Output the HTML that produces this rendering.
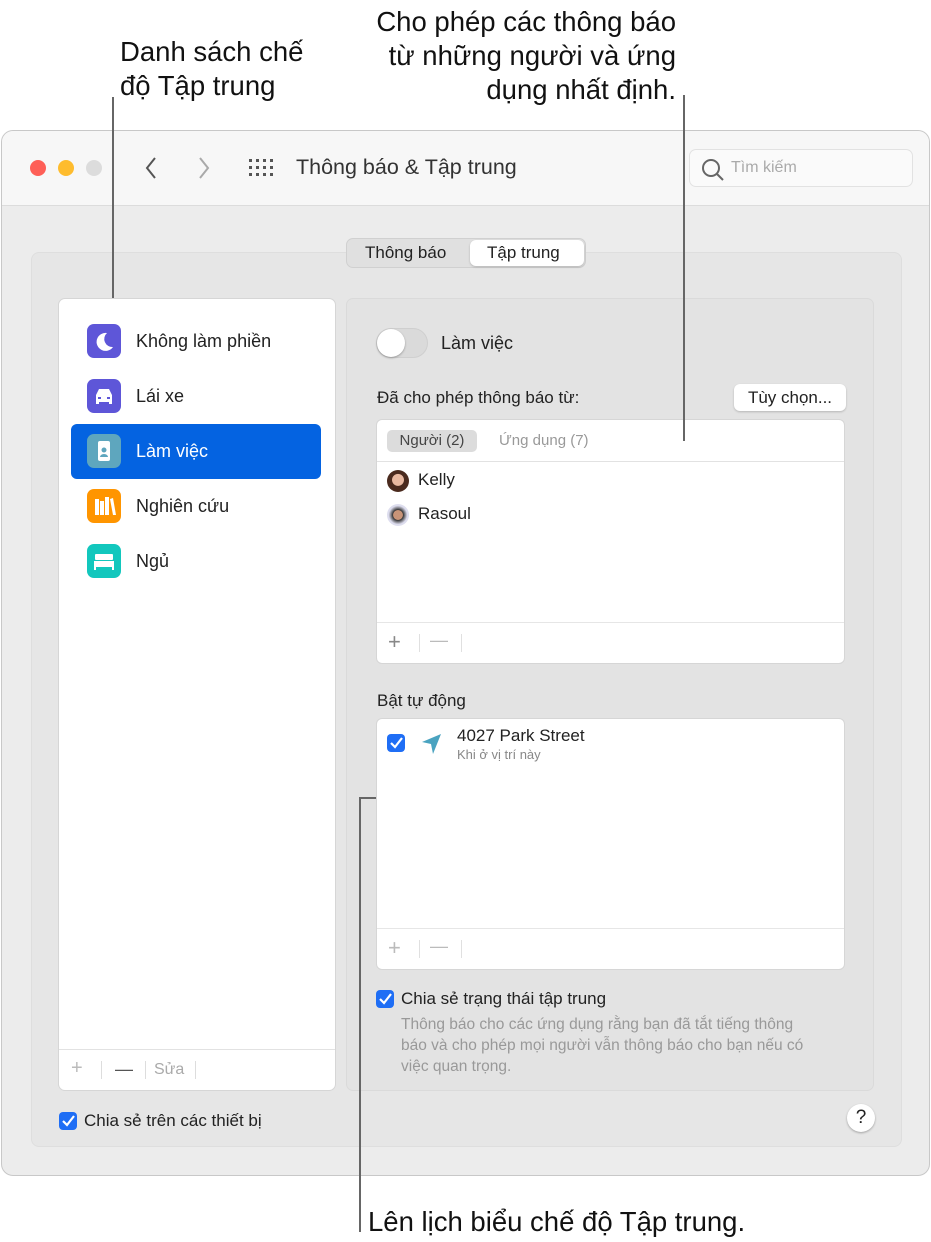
<!DOCTYPE html>
<html><head><meta charset="utf-8"><style>
*{box-sizing:border-box;margin:0;padding:0}
body{width:931px;height:1242px;background:#fff;position:relative;font-family:"Liberation Sans",sans-serif;color:#222;overflow:hidden}
.a{position:absolute}
.ann{position:absolute;font-size:27.5px;color:#111;line-height:34px}
.win{left:1px;top:130px;width:929px;height:1046px;border:1px solid #c8c8c8;border-radius:12px;background:#ececec;overflow:hidden}
.tb{left:0;top:0;width:100%;height:75px;background:#f7f7f7;border-bottom:1px solid #dcdcdc}
.dot{width:16px;height:16px;border-radius:50%;top:29px}
.t15{font-size:17px}
.icon{width:34px;height:34px;border-radius:7px;left:28px}
.row{left:12px;width:250px;height:55px}
.row span{position:absolute;left:65px;top:17px;font-size:18px}
.box{background:#fff;border:1px solid #d6d6d6;border-radius:6px}
.chk{width:18px;height:18px;border-radius:4px;background:#1f6ef5}
.line{background:#666;position:absolute}
</style></head><body>
<div class="ann" style="left:120px;top:35px">Danh sách chế<br>độ Tập trung</div>
<div class="ann" style="left:340px;top:5px;width:336px;text-align:right">Cho phép các thông báo<br>từ những người và ứng<br>dụng nhất định.</div>
<div class="ann" style="left:368px;top:1205px">Lên lịch biểu chế độ Tập trung.</div>

<div class="a win">
 <div class="a tb">
  <div class="a dot" style="left:28px;background:#fe5f57"></div>
  <div class="a dot" style="left:56px;background:#febc2e"></div>
  <div class="a dot" style="left:84px;background:#dcdcdc"></div>
  <svg class="a" style="left:140px;top:24px" width="20" height="26"><path d="M13 3L5 13l8 10" fill="none" stroke="#555" stroke-width="2"/></svg>
  <svg class="a" style="left:192px;top:24px" width="20" height="26"><path d="M6 3l8 10-8 10" fill="none" stroke="#aaa" stroke-width="2"/></svg>
  <svg class="a" style="left:246px;top:27px" width="28" height="20" fill="#555"><g><rect x="1" y="1" width="3" height="3"/><rect x="8" y="1" width="3" height="3"/><rect x="15" y="1" width="3" height="3"/><rect x="22" y="1" width="3" height="3"/><rect x="1" y="8" width="3" height="3"/><rect x="8" y="8" width="3" height="3"/><rect x="15" y="8" width="3" height="3"/><rect x="22" y="8" width="3" height="3"/><rect x="1" y="15" width="3" height="3"/><rect x="8" y="15" width="3" height="3"/><rect x="15" y="15" width="3" height="3"/><rect x="22" y="15" width="3" height="3"/></g></svg>
  <div class="a" style="left:294px;top:24px;font-size:21.5px;color:#333">Thông báo &amp; Tập trung</div>
  <div class="a" style="left:687px;top:18px;width:224px;height:38px;border:1px solid #e2e2e2;border-radius:7px;background:#fafafa"></div>
  <svg class="a" style="left:698px;top:26px" width="26" height="26"><circle cx="11" cy="11" r="8" fill="none" stroke="#666" stroke-width="2"/><path d="M17 17l6 6" stroke="#666" stroke-width="2"/></svg>
  <div class="a" style="left:729px;top:28px;font-size:16px;color:#aaa">Tìm kiếm</div>
 </div>
 <div class="a" style="left:29px;top:121px;width:871px;height:895px;background:#e6e6e6;border-radius:8px;border:1px solid #dedede"></div>
 <div class="a" style="left:344px;top:107px;width:240px;height:30px;background:#e0e0e0;border:1px solid #d0d0d0;border-radius:7px"></div>
 <div class="a t15" style="left:363px;top:112px">Thông báo</div>
 <div class="a" style="left:468px;top:109px;width:114px;height:26px;background:#fff;border-radius:6px;box-shadow:0 1px 2px rgba(0,0,0,.2)"></div>
 <div class="a t15" style="left:485px;top:112px">Tập trung</div>

 <div class="a box" style="left:56px;top:167px;width:278px;height:793px;border-radius:7px">
  <div class="a row" style="top:15px"><div class="a icon" style="left:16px;top:10px;background:#5e56d8"><svg width="34" height="34"><path d="M20 9a9 9 0 1 0 6 14a8 8 0 0 1-6-14z" fill="#fff"/></svg></div><span>Không làm phiền</span></div>
  <div class="a row" style="top:70px"><div class="a icon" style="left:16px;top:10px;background:#5e56d8"><svg width="34" height="34"><path d="M9 16l3-6h10l3 6v9h-3v-2H12v2H9z" fill="#fff"/><rect x="11" y="18" width="3" height="2" fill="#5e56d8"/><rect x="20" y="18" width="3" height="2" fill="#5e56d8"/></svg></div><span>Lái xe</span></div>
  <div class="a row" style="top:125px;background:#0463e1;border-radius:6px"><div class="a icon" style="left:16px;top:10px;background:#5ea6be"><svg width="34" height="34"><rect x="11" y="7" width="12" height="20" rx="2" fill="#fff"/><circle cx="17" cy="16" r="2.5" fill="#5ea6be"/><path d="M13 23a4 3 0 0 1 8 0z" fill="#5ea6be"/></svg></div><span style="color:#fff">Làm việc</span></div>
  <div class="a row" style="top:180px"><div class="a icon" style="left:16px;top:10px;background:#ff9500"><svg width="34" height="34" fill="#fff"><rect x="8" y="10" width="4" height="16"/><rect x="13" y="12" width="4" height="14"/><rect x="18" y="8" width="4" height="18"/><path d="M23 10l3-1 3 17h-3z"/></svg></div><span>Nghiên cứu</span></div>
  <div class="a row" style="top:235px"><div class="a icon" style="left:16px;top:10px;background:#12c7bd"><svg width="34" height="34" fill="#fff"><rect x="8" y="10" width="18" height="6" rx="1"/><rect x="7" y="17" width="20" height="6"/><rect x="7" y="23" width="2" height="3"/><rect x="25" y="23" width="2" height="3"/></svg></div><span>Ngủ</span></div>
  <div class="a" style="left:0;top:750px;width:100%;border-top:1px solid #e2e2e2"></div>
  <div class="a" style="left:12px;top:758px;font-size:20px;color:#bbb">+</div>
  <div class="a" style="left:42px;top:762px;height:18px;border-left:1px solid #ddd"></div>
  <div class="a" style="left:56px;top:760px;font-size:18px;color:#555">—</div>
  <div class="a" style="left:86px;top:762px;height:18px;border-left:1px solid #ddd"></div>
  <div class="a" style="left:95px;top:762px;font-size:16px;color:#aaa">Sửa</div>
  <div class="a" style="left:136px;top:762px;height:18px;border-left:1px solid #ddd"></div>
 </div>
 <div class="a chk" style="left:57px;top:981px"></div>
 <svg class="a" style="left:57px;top:981px" width="18" height="18"><path d="M4 9l4 4 7-9" fill="none" stroke="#fff" stroke-width="2.2"/></svg>
 <div class="a t15" style="left:82px;top:980px">Chia sẻ trên các thiết bị</div>
 <div class="a" style="left:845px;top:973px;width:28px;height:28px;border-radius:50%;background:#fff;box-shadow:0 1px 2px rgba(0,0,0,.3);text-align:center;font-size:19px;line-height:28px">?</div>

 <div class="a" style="left:344px;top:167px;width:528px;height:793px;background:#e3e3e3;border-radius:7px;border:1px solid #dadada"></div>
 <div class="a" style="left:374px;top:197px;width:52px;height:30px;border-radius:15px;background:#dadada;border:1px solid #cfcfcf"></div>
 <div class="a" style="left:375px;top:198px;width:28px;height:28px;border-radius:50%;background:#fff;box-shadow:0 1px 2px rgba(0,0,0,.3)"></div>
 <div class="a" style="left:439px;top:202px;font-size:18px">Làm việc</div>
 <div class="a t15" style="left:375px;top:257px">Đã cho phép thông báo từ:</div>
 <div class="a" style="left:732px;top:253px;width:112px;height:27px;background:#fff;border-radius:6px;box-shadow:0 1px 2px rgba(0,0,0,.2);font-size:17px;text-align:center;line-height:27px">Tùy chọn...</div>
 <div class="a box" style="left:374px;top:288px;width:469px;height:245px">
  <div class="a" style="left:10px;top:10px;width:90px;height:22px;background:#dcdcdc;border-radius:5px;font-size:15px;color:#444;text-align:center;line-height:22px">Người (2)</div>
  <div class="a" style="left:122px;top:12px;font-size:15px;color:#999">Ứng dụng (7)</div>
  <div class="a" style="left:0;top:41px;width:100%;border-top:1px solid #e2e2e2"></div>
  <div class="a" style="left:10px;top:50px;width:22px;height:22px;border-radius:50%;background:radial-gradient(circle at 50% 45%,#e8b8a0 35%,#4a2a1e 38%)"></div>
  <div class="a" style="left:41px;top:50px;font-size:17px">Kelly</div>
  <div class="a" style="left:10px;top:84px;width:22px;height:22px;border-radius:50%;background:radial-gradient(circle at 50% 50%,#c89478 30%,#333 33%,#dde 60%)"></div>
  <div class="a" style="left:41px;top:84px;font-size:17px">Rasoul</div>
  <div class="a" style="left:0;top:202px;width:100%;border-top:1px solid #e6e6e6"></div>
  <div class="a" style="left:11px;top:209px;font-size:22px;color:#888">+</div>
  <div class="a" style="left:42px;top:214px;height:18px;border-left:1px solid #e0e0e0"></div>
  <div class="a" style="left:53px;top:210px;font-size:18px;color:#bbb">—</div>
  <div class="a" style="left:84px;top:214px;height:18px;border-left:1px solid #e0e0e0"></div>
 </div>
 <div class="a t15" style="left:375px;top:560px">Bật tự động</div>
 <div class="a box" style="left:374px;top:587px;width:469px;height:252px">
  <div class="a chk" style="left:10px;top:15px"></div>
  <svg class="a" style="left:10px;top:15px" width="18" height="18"><path d="M4 9l4 4 7-9" fill="none" stroke="#fff" stroke-width="2.2"/></svg>
  <svg class="a" style="left:42px;top:12px" width="26" height="26"><path d="M22 3L3 11l9 2 2 10z" fill="#4aa3c0"/></svg>
  <div class="a" style="left:80px;top:7px;font-size:17px">4027 Park Street</div>
  <div class="a" style="left:80px;top:28px;font-size:13px;color:#888">Khi ở vị trí này</div>
  <div class="a" style="left:0;top:209px;width:100%;border-top:1px solid #e6e6e6"></div>
  <div class="a" style="left:11px;top:216px;font-size:22px;color:#bbb">+</div>
  <div class="a" style="left:42px;top:221px;height:18px;border-left:1px solid #e0e0e0"></div>
  <div class="a" style="left:53px;top:217px;font-size:18px;color:#bbb">—</div>
  <div class="a" style="left:84px;top:221px;height:18px;border-left:1px solid #e0e0e0"></div>
 </div>
 <div class="a chk" style="left:374px;top:859px"></div>
 <svg class="a" style="left:374px;top:859px" width="18" height="18"><path d="M4 9l4 4 7-9" fill="none" stroke="#fff" stroke-width="2.2"/></svg>
 <div class="a t15" style="left:399px;top:858px">Chia sẻ trạng thái tập trung</div>
 <div class="a" style="left:399px;top:883px;white-space:nowrap;font-size:15.5px;color:#999;line-height:21px">Thông báo cho các ứng dụng rằng bạn đã tắt tiếng thông<br>báo và cho phép mọi người vẫn thông báo cho bạn nếu có<br>việc quan trọng.</div>
</div>

<div class="line" style="left:112px;top:97px;width:2px;height:201px"></div>
<div class="line" style="left:683px;top:95px;width:2px;height:346px"></div>
<div class="line" style="left:359px;top:797px;width:17px;height:2px"></div>
<div class="line" style="left:359px;top:797px;width:2px;height:435px"></div>
</body></html>
